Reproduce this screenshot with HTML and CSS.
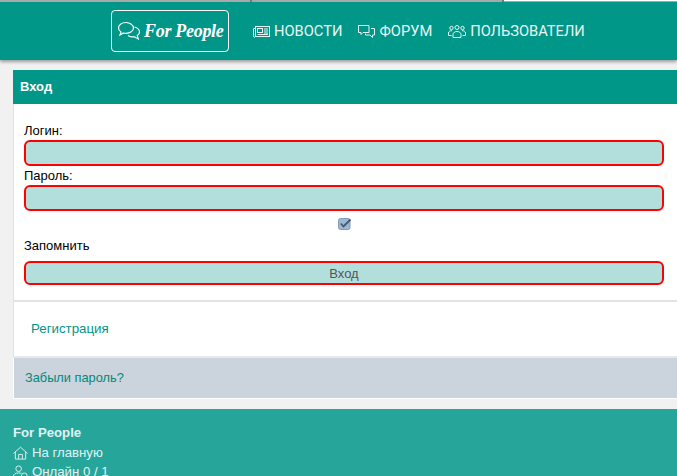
FILE: index.html
```html
<!DOCTYPE html>
<html>
<head>
	<meta charset="UTF-8">
	<title>For People</title>
	<link rel="stylesheet" href="styles.css">
</head>
<body>
	<div class="topstrip"><i></i><i></i><i class="light"></i></div>
	<header class="header">
		<a class="logo">
			<svg class="logo-icon" viewBox="0 0 24 20" fill="none" stroke="#fff" stroke-width="1.2"><path d="M9 1.500c-4 0-7.500 2.400-7.500 5.500 0 1.600 1 3 2.500 4l-1 3 3.500-2c.8.200 1.600.3 2.500.3 4 0 7.500-2.400 7.500-5.300S13 1.500 9 1.500z"/><path d="M17.500 6c2.800.8 5 2.600 5 5 0 1.500-.9 2.700-2.200 3.600l1 3.400-3.800-2.200c-2.300.4-4.800-.1-6.500-1.300"/></svg>
			<span class="logo-text">For People</span>
		</a>
		<nav class="nav">
			<a class="nav-item">
				<svg class="nav-icon" viewBox="0 0 17 13" fill="none" stroke="#e8f6f5"><rect x="2.500" y="1.500" width="14" height="10"/><path d="M2.500 3.500h-2v7a1 1 0 0 0 2 1"/><rect x="4.500" y="3.500" width="5" height="4"/><path d="M11 4h4M11 6h4M11 8h4M4.500 9.500h10.500"/></svg>
				НОВОСТИ
			</a>
			<a class="nav-item">
				<svg class="nav-icon" viewBox="0 0 17 13" fill="none" stroke="#e8f6f5"><path d="M.5.500h10.500v7h-6l-2 2v-2h-2.500z"/><path d="M13 3.500h3.500v6.500h-2v2.500l-2.500-2.500h-4.500v-1.500"/></svg>
				ФОРУМ
			</a>
			<a class="nav-item">
				<svg class="nav-icon nav-icon-wide" viewBox="0 0 18 13" fill="none" stroke="#e8f6f5"><circle cx="9" cy="2.500" r="2"/><circle cx="3.500" cy="3" r="1.700"/><circle cx="14.500" cy="3" r="1.700"/><path d="M5 12.500v-3c0-2 2-3 4-3s4 1 4 3v3z"/><path d="M3.500 10.500h-3V8c0-1.500 1.500-2.300 3.500-2.300M14.500 10.500h3V8c0-1.500-1.500-2.300-3.500-2.300"/></svg>
				ПОЛЬЗОВАТЕЛИ
			</a>
		</nav>
	</header>

	<main class="main">
		<div class="panel-head">Вход</div>
		<form class="login">
			<label class="field-label">Логин:</label>
			<input class="field" type="text">
			<label class="field-label">Пароль:</label>
			<input class="field" type="text">
			<div class="remember">
				<svg class="check" viewBox="0 0 14 12"><rect x=".5" y=".5" width="11.500" height="11" rx="2" fill="#9db8d6" stroke="#7d9cc0"/><path d="M2.800 5.500 5.500 8.500 12.500 1.500" fill="none" stroke="#4a5666" stroke-width="1.800"/></svg>
			</div>
			<label class="remember-label">Запомнить</label>
			<button class="submit" type="button">Вход</button>
		</form>
		<div class="register"><a>Регистрация</a></div>
		<div class="forgot"><a>Забыли пароль?</a></div>
	</main>

	<footer class="footer">
		<div class="footer-title">For People</div>
		<div class="footer-row">
			<svg class="footer-icon" viewBox="0 0 16 14" fill="none" stroke="#e0f2f1"><path d="M.5 7.500 8 .8l7.500 6.700"/><path d="M2.500 6v7.500h11V6"/><path d="M6 13.500V8.500h4v5"/></svg>
			На главную
		</div>
		<div class="footer-row">
			<svg class="footer-icon" viewBox="0 0 16 14" fill="none" stroke="#e0f2f1"><circle cx="6" cy="3.500" r="3"/><path d="M.5 13.500v-2c0-2 2-3.500 5.500-3.500 1 0 2 .1 2.800.4"/><circle cx="12" cy="11" r="3"/></svg>
			Онлайн 0 / 1
		</div>
	</footer>
</body>
</html>
```

FILE: styles.css
```css
html, body {
    margin: 0;
    padding: 0;
}
body {
    height: 476px;
    overflow: hidden;
    background: #f1f1f1;
    font-family: "Liberation Sans", Arial, sans-serif;
    font-size: 13px;
    color: #000;
}
.topstrip {
    display: flex;
    height: 2px;
}
.topstrip i {
    width: 250px;
    background: #a8a8a8;
    border-right: 2px solid #777;
}
.topstrip .light {
    flex: 1;
    border-right: 0;
    border-top: 1px solid #fff;
}
.header {
    display: flex;
    align-items: center;
    height: 58px;
    padding-left: 111px;
    background: #009688;
    box-shadow: 0 2px 3px rgba(0,0,0,.35);
}
.logo {
    display: flex;
    align-items: center;
    gap: 3px;
    box-sizing: border-box;
    width: 118px;
    height: 42px;
    padding-left: 5px;
    border: 1px solid #fff;
    border-radius: 4px;
    color: #fff;
}
.logo-icon {
    flex: none;
    width: 24px;
    height: 20px;
}
.logo-text {
    font-family: "Liberation Serif", serif;
    font-size: 18px;
    font-weight: bold;
    font-style: italic;
    letter-spacing: -.3px;
    white-space: nowrap;
}
.nav {
    display: flex;
    margin-left: 24px;
    gap: 16px;
}
.nav-item {
    display: flex;
    align-items: center;
    gap: 4px;
    font-family: Roboto, sans-serif;
    font-size: 14.7px;
    color: #e8f6f5;
}
.nav-icon {
    flex: none;
    width: 17px;
    height: 13px;
}
.nav-icon-wide {
    width: 18px;
}
.main {
    margin: 10px 0 0 13px;
    background: #fff;
}
.panel-head {
    height: 34px;
    padding-left: 7px;
    background: #009688;
    color: #fff;
    font-weight: bold;
    line-height: 33px;
}
.login {
    display: flex;
    flex-direction: column;
    height: 198px;
    box-sizing: border-box;
    padding: 19px 13px 0 10px;
    border-bottom: 2px solid #e2e2e2;
    border-left: 1px solid #e2e2e2;
}
.field-label {
    height: 15px;
    line-height: 15px;
}
.field {
    box-sizing: border-box;
    height: 26px;
    margin: 2px 0;
    border: 2px solid #f00;
    border-radius: 6px;
    background: #b2dfdb;
    outline: 0;
}
.remember {
    display: flex;
    justify-content: center;
    height: 17px;
    padding: 5px 0 0 2px;
}
.check {
    flex: none;
    width: 14px;
    height: 12px;
}
.remember-label {
    height: 15px;
    margin-top: 3px;
    line-height: 15px;
}
.submit {
    height: 24px;
    margin-top: 8px;
    border: 2px solid #f00;
    border-radius: 6px;
    background: #b2dfdb;
    font-family: "Liberation Sans", Arial, sans-serif;
    font-size: 13px;
    color: #555;
}
.register {
    height: 54px;
    padding-left: 17px;
    border-left: 1px solid #e2e2e2;
    border-bottom: 2px solid #e8e8e8;
    font-size: 13.3px;
    line-height: 54px;
    color: #009688;
}
.forgot {
    height: 40px;
    padding-left: 11px;
    margin-left: 1px;
    background: #cbd3dc;
    border-bottom: 1px solid #fff;
    font-size: 12.8px;
    line-height: 40px;
    color: #00897b;
}
.footer {
    margin-top: 10px;
    padding: 15px 13px 0;
    height: 67px;
    background: #26a69a;
    color: #e0f2f1;
}
.footer-title {
    height: 17px;
    margin-bottom: 2px;
    font-size: 13.2px;
    font-weight: bold;
    line-height: 17px;
}
.footer-row {
    display: flex;
    align-items: center;
    gap: 4px;
    height: 19px;
    font-size: 13.2px;
}
.footer-icon {
    flex: none;
    width: 15px;
    height: 14px;
}
```
